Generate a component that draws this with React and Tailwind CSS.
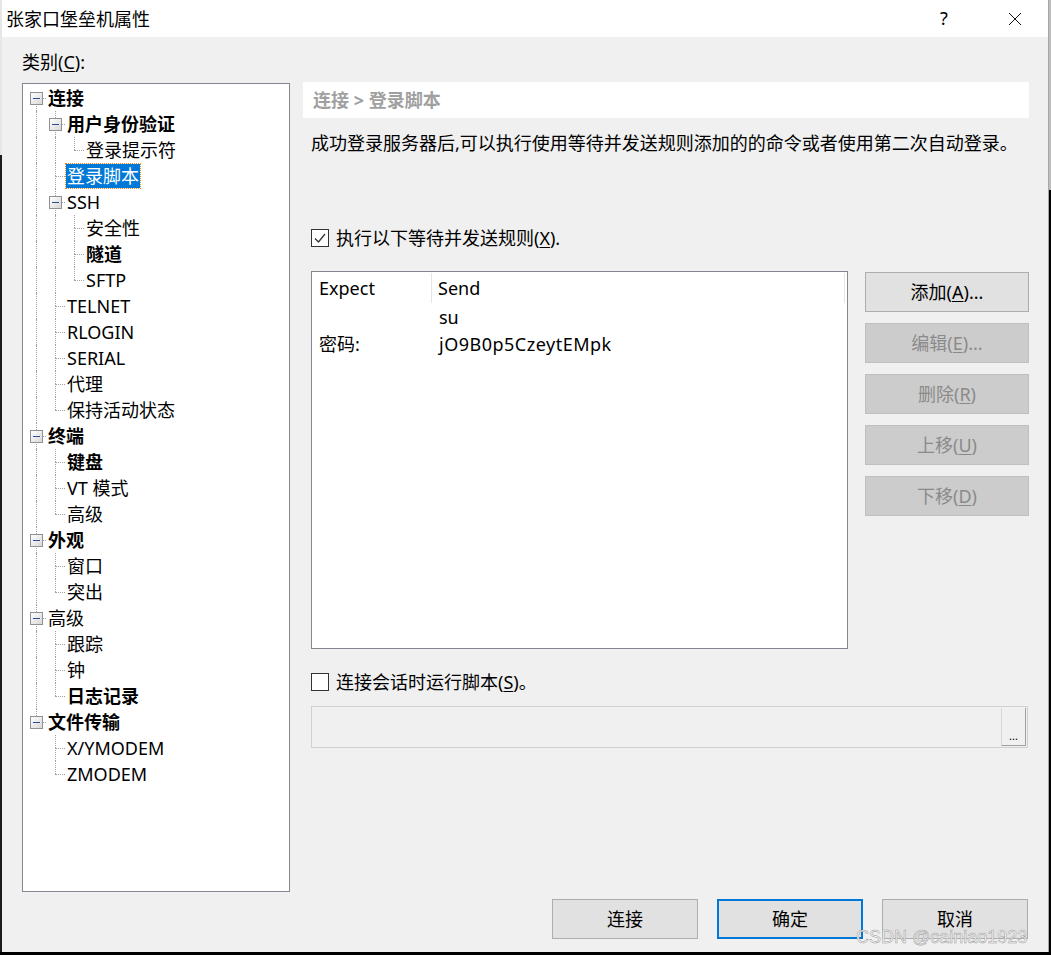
import React from "react";

const FONT = "font-['Noto_Sans','Noto_Sans_CJK_SC',sans-serif]";

// 左侧树的数据
const tree = [
  {
    t: "连接",
    b: true,
    c: [
      { t: "用户身份验证", b: true, c: [{ t: "登录提示符" }] },
      { t: "登录脚本", sel: true },
      { t: "SSH", c: [{ t: "安全性" }, { t: "隧道", b: true }, { t: "SFTP" }] },
      { t: "TELNET" },
      { t: "RLOGIN" },
      { t: "SERIAL" },
      { t: "代理" },
      { t: "保持活动状态" },
    ],
  },
  { t: "终端", b: true, c: [{ t: "键盘", b: true }, { t: "VT 模式" }, { t: "高级" }] },
  { t: "外观", b: true, c: [{ t: "窗口" }, { t: "突出" }] },
  { t: "高级", c: [{ t: "跟踪" }, { t: "钟" }, { t: "日志记录", b: true }] },
  { t: "文件传输", b: true, c: [{ t: "X/YMODEM" }, { t: "ZMODEM" }] },
];

function flatten(nodes, lastFlags = [], out = []) {
  nodes.forEach((n, i) => {
    const isLast = i === nodes.length - 1;
    out.push({
      label: n.t,
      bold: n.b,
      sel: n.sel,
      hasKids: !!n.c,
      isLast,
      first: out.length === 0,
      lastFlags,
    });
    if (n.c) flatten(n.c, [...lastFlags, isLast], out);
  });
  return out;
}

const rows = flatten(tree);

function Expander() {
  return (
    <div className="absolute left-[3px] top-[7px] flex h-[13px] w-[13px] items-center justify-center border border-[#919191] bg-gradient-to-br from-white to-[#d8d8d8]">
      <div className="h-px w-[7px] bg-[#2b4f93]" />
    </div>
  );
}

function TreeRow({ row }) {
  return (
    <div className="flex h-[26px] items-center">
      {row.lastFlags.map((l, i) => (
        <div key={i} className="relative h-full w-[19px] shrink-0">
          {!l && (
            <div className="absolute left-[9px] top-0 h-full border-l border-dotted border-[#a0a0a0]" />
          )}
        </div>
      ))}
      <div className="relative h-full w-[19px] shrink-0">
        {!row.first && (
          <div className="absolute left-[9px] top-0 h-[13px] border-l border-dotted border-[#a0a0a0]" />
        )}
        {!row.isLast && (
          <div className="absolute left-[9px] top-[13px] h-[13px] border-l border-dotted border-[#a0a0a0]" />
        )}
        <div className="absolute left-[9px] top-[13px] w-[10px] border-t border-dotted border-[#a0a0a0]" />
        {row.hasKids && <Expander />}
      </div>
      <span
        className={
          row.sel
            ? "ml-px px-px leading-[24px] bg-[#0078d7] text-white outline outline-1 outline-dotted outline-[#e08a2c]"
            : row.bold
            ? "ml-px px-px leading-[24px] font-bold text-black"
            : "ml-px px-px leading-[24px] text-black"
        }
      >
        {row.label}
      </span>
    </div>
  );
}

function SideButton({ children, disabled }) {
  return (
    <div
      className={
        disabled
          ? "flex h-[40px] items-center justify-center border border-[#bfbfbf] bg-[#cccccc] text-[#8a8a8a]"
          : "flex h-[40px] items-center justify-center border border-[#adadad] bg-[#e1e1e1] text-black"
      }
    >
      {children}
    </div>
  );
}

function Check({ checked }) {
  return (
    <div className="flex h-[18px] w-[18px] items-center justify-center border border-[#333333] bg-white">
      {checked && (
        <svg width="14" height="14" viewBox="0 0 14 14">
          <polyline points="2,7.5 5.5,11 12,3" fill="none" stroke="#333" strokeWidth="1.3" />
        </svg>
      )}
    </div>
  );
}

export default function App() {
  return (
    <div className={`${FONT} flex h-[955px] w-[1051px] items-start bg-black text-[18px]`}>
      {/* 左边露出的背景窗口 */}
      <div className="flex h-[952px] w-[2px] flex-col">
        <div className="h-[155px] bg-[#e6e6e6]" />
        <div className="flex-1 bg-[#1c1c1c]" />
      </div>

      <div className="relative flex h-[952px] w-[1047px] flex-col border-r border-[#a6a6a6] bg-[#f0f0f0]">
        {/* 标题栏 */}
        <div className="flex h-[37px] items-center bg-white">
          <span className="pl-[4px] leading-[24px] text-black">张家口堡垒机属性</span>
          <div className="ml-auto flex w-[46px] justify-center text-[18px] text-black">?</div>
          <div className="ml-[25px] mr-[10px] flex w-[46px] justify-center">
            <svg width="14" height="14" viewBox="0 0 14 14">
              <path d="M1 1 L13 13 M13 1 L1 13" stroke="#111" strokeWidth="1" />
            </svg>
          </div>
        </div>

        <div className="flex flex-col pl-[20px] pt-[13px]">
          <div className="leading-[24px] text-black">
            类别(<span className="underline underline-offset-2">C</span>):
          </div>

          <div className="mt-[8px] flex items-start">
            {/* 类别树 */}
            <div className="mt-px h-[809px] w-[268px] border border-[#828790] bg-white pl-[4px] pt-px">
              {rows.map((r, i) => (
                <TreeRow key={i} row={r} />
              ))}
            </div>

            {/* 右侧面板 */}
            <div className="ml-[13px] flex w-[726px] flex-col">
              <div className="flex h-[36px] items-center bg-white pl-[10px] font-bold text-[#a0a0a0]">
                连接 &gt; 登录脚本
              </div>
              <div className="mt-[13px] pl-[8px] leading-[24px] text-black">
                成功登录服务器后,可以执行使用等待并发送规则添加的的命令或者使用第二次自动登录。
              </div>

              <div className="mt-[71px] flex h-[24px] items-center gap-[7px] pl-[8px] text-black">
                <Check checked />
                <span>
                  执行以下等待并发送规则(<span className="underline underline-offset-2">X</span>).
                </span>
              </div>

              <div className="mt-[21px] flex gap-[17px] pl-[8px]">
                <div className="h-[378px] w-[537px] border border-[#828790] bg-white text-black">
                  <div className="flex h-[32px] items-center">
                    <div className="flex h-[30px] w-[120px] items-center border-r border-[#e5e5e5] pl-[7px]">Expect</div>
                    <div className="flex h-[30px] w-[413px] items-center border-r border-[#e5e5e5] pl-[6px]">Send</div>
                  </div>
                  <div className="flex h-[27px] items-center">
                    <div className="w-[120px] pl-[7px]" />
                    <div className="pl-[7px]">su</div>
                  </div>
                  <div className="flex h-[27px] items-center">
                    <div className="w-[120px] pl-[7px]">密码:</div>
                    <div className="pl-[7px] tracking-[0.5px]">jO9B0p5CzeytEMpk</div>
                  </div>
                </div>

                <div className="mt-px flex w-[164px] flex-col gap-[11px]">
                  <SideButton>
                    添加(<span className="underline underline-offset-2">A</span>)...
                  </SideButton>
                  <SideButton disabled>
                    编辑(<span className="underline underline-offset-2">E</span>)...
                  </SideButton>
                  <SideButton disabled>
                    删除(<span className="underline underline-offset-2">R</span>)
                  </SideButton>
                  <SideButton disabled>
                    上移(<span className="underline underline-offset-2">U</span>)
                  </SideButton>
                  <SideButton disabled>
                    下移(<span className="underline underline-offset-2">D</span>)
                  </SideButton>
                </div>
              </div>

              <div className="mt-[21px] flex h-[24px] items-center gap-[7px] pl-[8px] text-black">
                <Check />
                <span>
                  连接会话时运行脚本(<span className="underline underline-offset-2">S</span>)。
                </span>
              </div>

              <div className="ml-[8px] mt-[12px] flex h-[42px] w-[717px] items-center justify-end border border-[#d0d0d0] bg-[#f0f0f0] pr-px">
                <div className="flex h-[38px] w-[25px] items-end justify-center border-b border-l border-r border-b-[#a0a0a0] border-l-[#d8d8d8] border-r-[#a0a0a0] pb-[4px] text-[11px] leading-none text-black">
                  ...
                </div>
              </div>
            </div>
          </div>

          {/* 底部按钮 */}
          <div className="mt-[7px] flex justify-end gap-[19px] pr-[20px] text-black">
            <div className="flex h-[40px] w-[146px] items-center justify-center border border-[#adadad] bg-[#e1e1e1]">连接</div>
            <div className="flex h-[40px] w-[146px] items-center justify-center border-2 border-[#0078d7] bg-[#e1e1e1]">确定</div>
            <div className="flex h-[40px] w-[146px] items-center justify-center border border-[#adadad] bg-[#e1e1e1]">取消</div>
          </div>
        </div>

        {/* 水印 */}
        <div className="absolute left-[854px] top-[924px] font-['Liberation_Sans',sans-serif] text-[18px] leading-[26px] text-[#f8f8f8] [-webkit-text-stroke:0.5px_#9a9a9a]">
          CSDN @cainiao1923
        </div>
      </div>

      <div className="flex h-[952px] w-[2px] flex-col">
        <div className="h-[190px] bg-[#bdbdbd]" />
        <div className="flex-1 bg-black" />
      </div>
    </div>
  );
}
